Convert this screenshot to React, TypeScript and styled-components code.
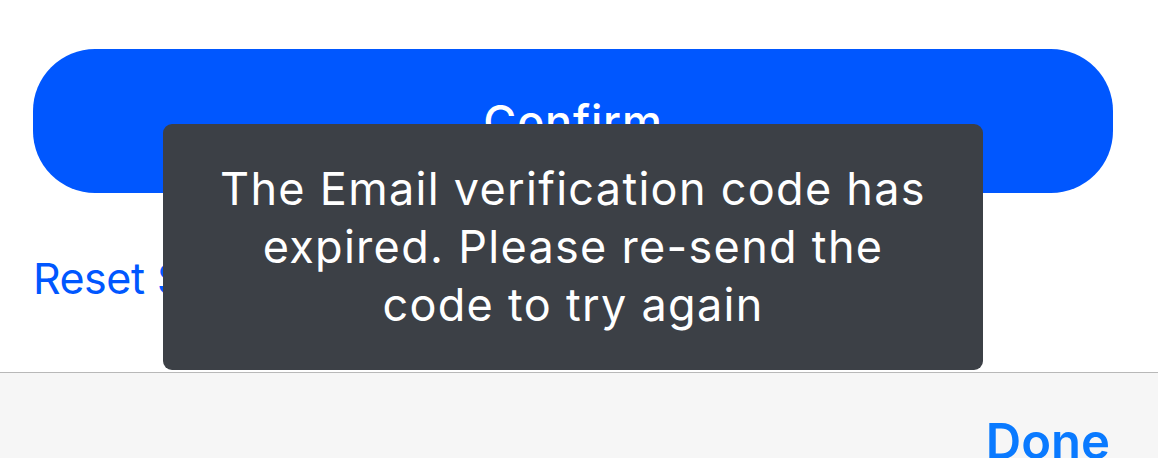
import React from "react";
import styled, { createGlobalStyle } from "styled-components";

const Global = createGlobalStyle`
  html, body { margin: 0; padding: 0; background: #ffffff; }
  body { font-family: Inter, "Noto Sans", sans-serif; -webkit-font-smoothing: antialiased; }
`;

const Screen = styled.div`
  position: relative;
  width: 1158px;
  height: 458px;
  overflow: hidden;
  background: #ffffff;
  display: flex;
  flex-direction: column;
`;

const Content = styled.div`
  flex: 1;
  display: flex;
  flex-direction: column;
  padding: 49px 45px 0 33px;
`;

const ConfirmButton = styled.button`
  height: 144px;
  width: 100%;
  border: none;
  border-radius: 62px;
  background: #0057ff;
  color: #ffffff;
  font-family: Inter, "Noto Sans", sans-serif;
  font-size: 45px;
  letter-spacing: 0.8px;
  font-weight: 500;
  display: flex;
  align-items: center;
  justify-content: center;
  padding: 0;
`;

const ResetLink = styled.a`
  margin-top: 60px;
  font-size: 43px;
  letter-spacing: -0.5px;
  word-spacing: 1px;
  line-height: 50px;
  color: #0057ff;
  text-decoration: none;
  align-self: flex-start;
`;

const BottomBar = styled.div`
  height: 85px;
  border-top: 1px solid #b8b8b8;
  background: #f6f6f6;
  display: flex;
  justify-content: flex-end;
  align-items: flex-start;
  padding-right: 48px;
`;

const DoneButton = styled.span`
  margin-top: 39px;
  font-size: 49px;
  line-height: 60px;
  font-weight: 600;
  color: #0a7aff;
`;

const Toast = styled.div`
  position: absolute;
  left: 163px;
  top: 124px;
  width: 820px;
  height: 246px;
  box-sizing: border-box;
  border-radius: 9px;
  background: #3c4046;
  color: #ffffff;
  display: flex;
  align-items: center;
  justify-content: center;
  text-align: center;
  padding: 0 20px;
  font-size: 45px;
  letter-spacing: 1.3px;
  line-height: 58px;
`;

export default function App() {
  return (
    <>
      <Global />
      <Screen>
        <Content>
          <ConfirmButton>Confirm</ConfirmButton>
          <ResetLink>Reset Security Password</ResetLink>
        </Content>
        <BottomBar>
          <DoneButton>Done</DoneButton>
        </BottomBar>
        <Toast>
          The Email verification code has
          <br />
          expired. Please re-send the
          <br />
          code to try again
        </Toast>
      </Screen>
    </>
  );
}
